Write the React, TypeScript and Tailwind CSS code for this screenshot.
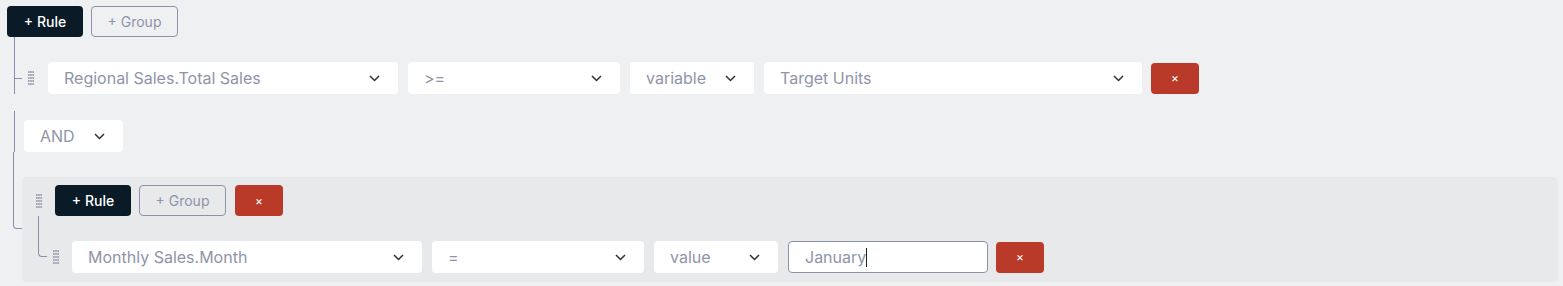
import React from 'react';

const LINE = 'bg-[#8b8db0]';

function Handle({ className = '' }: { className?: string }) {
  const rows = Array.from({ length: 5 }, (_, i) => i);
  return (
    <svg width="6" height="14" viewBox="0 0 6 14" className={`shrink-0 ${className}`}>
      {rows.map((r) => (
        <g key={r} fill="#9fa1b2">
          <rect x="0" y={r * 3} width="1.6" height="2" />
          <rect x="2.2" y={r * 3} width="1.6" height="2" />
          <rect x="4.4" y={r * 3} width="1.6" height="2" />
        </g>
      ))}
    </svg>
  );
}

function Chevron() {
  return (
    <svg width="11" height="7" viewBox="0 0 11 7" className="shrink-0">
      <path d="M1 1l4.5 4.5L10 1" fill="none" stroke="#2f3033" strokeWidth="1.5" />
    </svg>
  );
}

function Select({ label, w, className = '' }: { label: string; w: string; className?: string }) {
  return (
    <div
      className={`${w} h-[32px] shrink-0 bg-white rounded-[4px] flex items-center justify-between pl-[16px] pr-[18px] text-[16px] text-[#8f94a9] ${className}`}
    >
      <span className="truncate">{label}</span>
      <Chevron />
    </div>
  );
}

function RuleBtn() {
  return (
    <button className="w-[76px] h-[31px] rounded-[4px] bg-[#0a1a27] text-white text-[14px] font-medium">
      + Rule
    </button>
  );
}

function GroupBtn() {
  return (
    <button className="w-[87px] h-[31px] rounded-[4px] border border-[#8e92a8] text-[#8f94a9] text-[14px]">
      + Group
    </button>
  );
}

function RemoveBtn() {
  return (
    <button className="w-[48px] h-[31px] rounded-[4px] bg-[#ba3a29] text-white text-[12px] flex items-center justify-center shrink-0">
      ×
    </button>
  );
}

export default function App() {
  return (
    <div
      className="w-full h-[286px] bg-[#eff0f2] pl-[7px] pr-[5px] pt-[6px] overflow-hidden"
      style={{ fontFamily: 'Inter, "Noto Sans", sans-serif' }}
    >
      {/* root header */}
      <div className="flex gap-[8px]">
        <RuleBtn />
        <GroupBtn />
      </div>

      {/* root body */}
      <div className="mt-[25px] pl-[15px] flex flex-col">
        {/* rule 1 */}
        <div className="relative flex items-center h-[32px]">
          <span className={`absolute left-[-8px] top-[-25px] w-px h-[57px] ${LINE}`} />
          <span className={`absolute left-[-8px] top-[16px] w-[8px] h-px ${LINE}`} />
          <Handle className="ml-[6px] mr-[14px]" />
          <Select label="Regional Sales.Total Sales" w="w-[350px]" />
          <Select label=">=" w="w-[212px]" className="ml-[10px]" />
          <Select label="variable" w="w-[124px]" className="ml-[10px]" />
          <Select label="Target Units" w="w-[378px]" className="ml-[10px]" />
          <div className="ml-[9px]">
            <RemoveBtn />
          </div>
        </div>

        {/* combinator */}
        <div className="relative mt-[26px] h-[32px] flex">
          <span className={`absolute left-[-8px] top-[-9px] w-px h-[41px] ${LINE}`} />
          <Select label="AND" w="w-[99px]" className="ml-[2px]" />
        </div>

        {/* nested group */}
        <div className="relative mt-[25px] rounded-[4px] bg-[#e8e9eb] pl-[10px] pt-[8px] pb-[9px]">
          <span className="absolute left-[-9px] top-[-25px] w-[9px] h-[77px] border-l border-b border-[#8b8db0] rounded-bl-[4px]" />
          <div className="flex items-center">
            <Handle className="ml-[4px] mr-[13px]" />
            <div className="flex gap-[8px]">
              <RuleBtn />
              <GroupBtn />
              <div className="ml-[1px]">
                <RemoveBtn />
              </div>
            </div>
          </div>
          <div className="mt-[25px] pl-[15px]">
            <div className="relative flex items-center h-[32px]">
              <span className="absolute left-[-9px] top-[-25px] w-[9px] h-[41px] border-l border-b border-[#8b8db0] rounded-bl-[4px]" />
              <Handle className="ml-[6px] mr-[13px]" />
              <Select label="Monthly Sales.Month" w="w-[350px]" />
              <Select label="=" w="w-[212px]" className="ml-[10px]" />
              <Select label="value" w="w-[124px]" className="ml-[10px]" />
              <div className="ml-[10px] w-[200px] h-[32px] shrink-0 bg-white rounded-[4px] border border-[#8e92a8] flex items-center pl-[16px] text-[16px] text-[#8f94a9]">
                <span>January</span>
                <span className="inline-block w-px h-[19px] bg-[#1f1f1f]" />
              </div>
              <div className="ml-[8px]">
                <RemoveBtn />
              </div>
            </div>
          </div>
        </div>
      </div>
    </div>
  );
}
